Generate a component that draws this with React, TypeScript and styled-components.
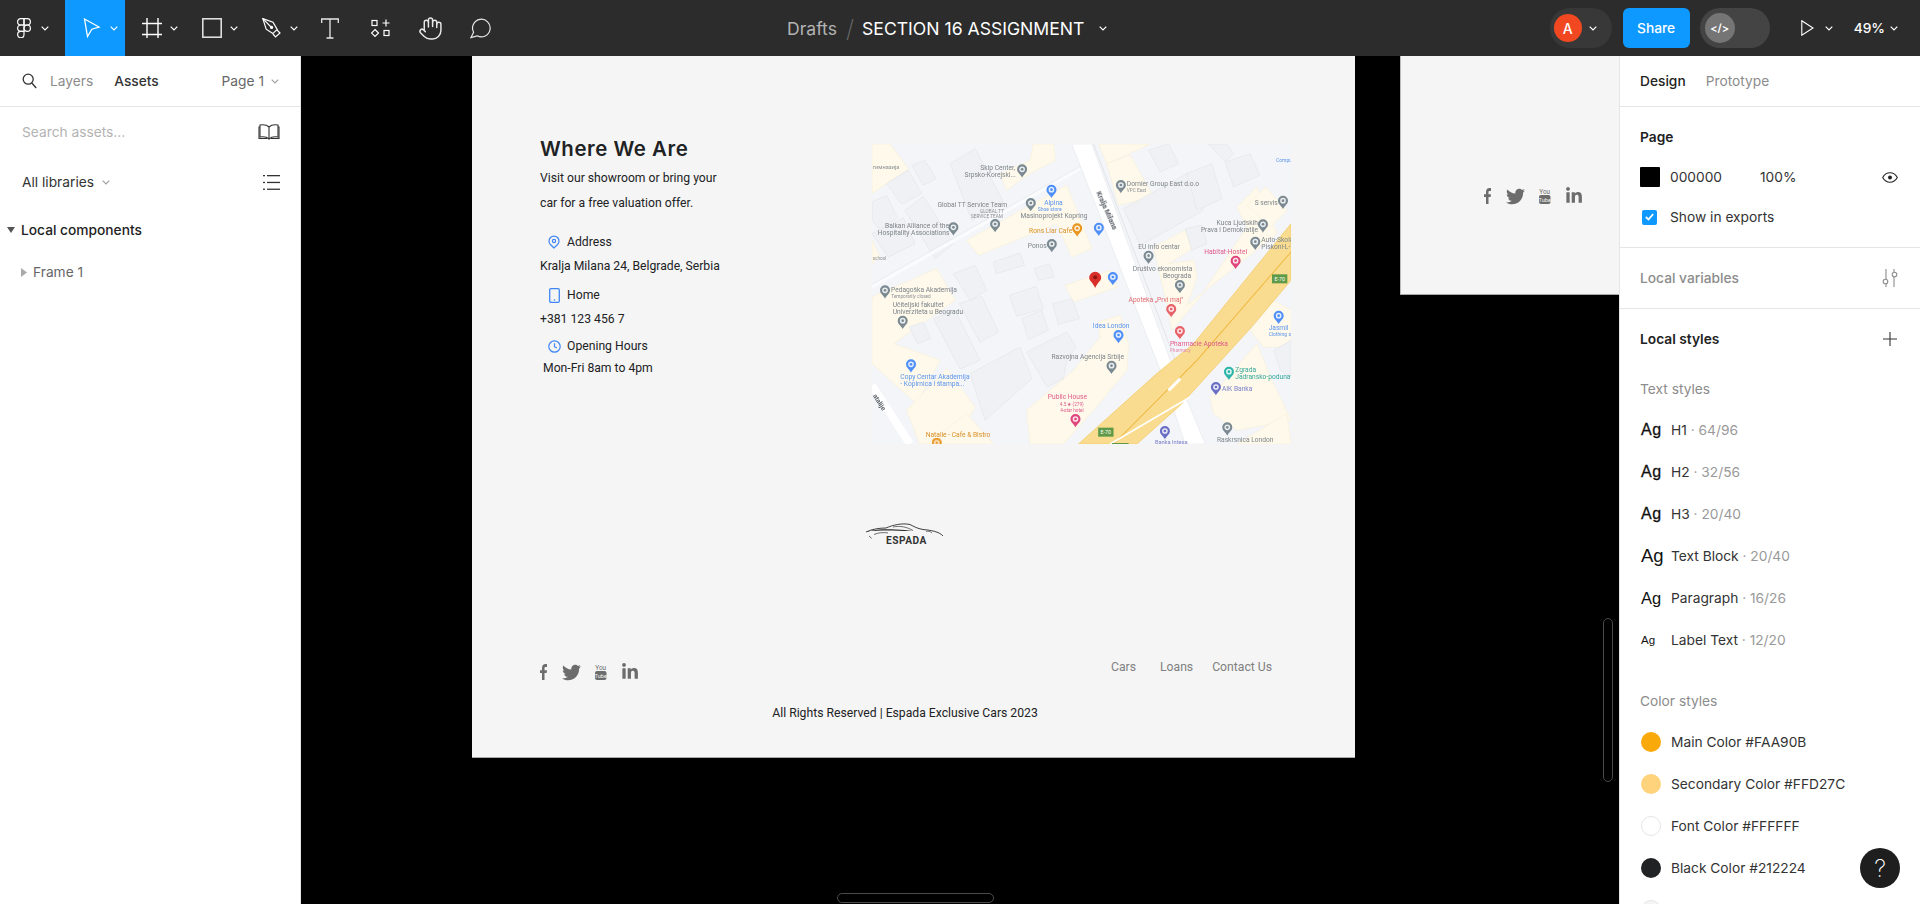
import React from "react";
import styled, { createGlobalStyle } from "styled-components";
import { FaTwitter, FaLinkedinIn } from "react-icons/fa";
import { Hand } from "lucide-react";

const Global = createGlobalStyle`
  html, body { margin: 0; padding: 0; height: 100%; overflow: hidden; background: #000; }
  body { font-family: Inter, "Liberation Sans", sans-serif; font-size: 13.75px; color: #333; }
  * { box-sizing: border-box; }
`;

const Shell = styled.div`
  width: 1920px; height: 904px; display: flex; flex-direction: column; overflow: hidden;
`;
const Toolbar = styled.header`
  height: 56px; flex: none; background: #2c2c2c; display: flex; align-items: center; position: relative; color: #fff;
`;
const Tools = styled.div`display: flex; height: 100%; width: 760px; flex: none;`;
const Tool = styled.div<{ $w: number; $active?: boolean; $pad?: number }>`
  width: ${(p) => p.$w}px; height: 100%; display: flex; align-items: center; flex: none;
  padding-left: ${(p) => p.$pad ?? 17}px; gap: 8px;
  background: ${(p) => (p.$active ? "#0d99ff" : "transparent")};
`;
const CenterTool = styled(Tool)`justify-content: center; padding-left: 0;`;
const Crumbs = styled.div`
  width: 350px; flex: none; margin-left: 27px; display: flex; align-items: center; font-size: 17.6px; white-space: nowrap;
`;
const Drafts = styled.span`color: #b3b3b3;`;
const Slash = styled.span`color: #6f6f6f; margin: 0 8px 0 9px; font-size: 24px; font-weight: 200;`;
const FileName = styled.span`color: #fff; font-weight: 400; margin-right: 15px;`;
const RightTools = styled.div`
  margin-left: auto; display: flex; align-items: center; height: 100%;
`;
const AvatarPill = styled.div`
  width: 62px; height: 40px; border-radius: 20px; background: #383838; display: flex; align-items: center; padding-left: 4px; gap: 7px;
`;
const Avatar = styled.div`
  width: 28px; height: 28px; border-radius: 50%; background: #f24822; color: #fff; display: flex; align-items: center; justify-content: center; font-size: 14px; font-weight: 500;
`;
const ShareButton = styled.div`
  width: 67px; height: 40px; margin-left: 11px; border-radius: 6px; background: #0d99ff; color: #fff; font-weight: 500; font-size: 13.75px; display: flex; align-items: center; justify-content: center;
`;
const DevPill = styled.div`
  width: 70px; height: 40px; margin-left: 10px; border-radius: 20px; background: #444; display: flex; align-items: center; padding-left: 5px;
`;
const DevKnob = styled.div`
  width: 30px; height: 30px; border-radius: 50%; background: #757575; display: flex; align-items: center; justify-content: center; font-size: 11px; font-weight: 600; color: #fff;
`;
const PlayWrap = styled.div`display: flex; align-items: center; gap: 11px; margin-left: 31px;`;
const ZoomWrap = styled.div`display: flex; align-items: center; gap: 5px; margin-left: 21px; margin-right: 22px; font-size: 13.75px; font-weight: 500; color: #fff;`;

const Body = styled.div`flex: 1; display: flex; min-height: 0;`;
const LeftPanel = styled.aside`
  width: 301px; flex: none; background: #fff; border-right: 1px solid #e5e5e5; display: flex; flex-direction: column;
`;
const LeftTabs = styled.div`
  height: 51px; border-bottom: 1px solid #e5e5e5; display: flex; align-items: center; padding-left: 22px; flex: none;
`;
const LeftTab = styled.span<{ $on?: boolean }>`
  color: ${(p) => (p.$on ? "#333" : "#8c8c8c")}; font-weight: ${(p) => (p.$on ? 500 : 400)}; margin-left: ${(p) => (p.$on ? 21 : 13)}px;
`;
const PageSel = styled.div`margin-left: auto; margin-right: 21px; display: flex; align-items: center; gap: 7px; color: #666;`;
const LeftRow = styled.div<{ $h: number; $pl?: number }>`
  height: ${(p) => p.$h}px; flex: none; display: flex; align-items: center; padding: 0 20px 0 ${(p) => p.$pl ?? 22}px;
`;
const Placeholder = styled.span`color: #b3b3b3;`;
const RowEnd = styled.div`margin-left: auto; display: flex;`;
const Libs = styled.span`color: #333; margin-right: 8px;`;
const GroupTitle = styled.span`font-weight: 500; color: #222; margin-left: 6px;`;
const FrameName = styled.span`color: #666; margin-left: 6px;`;

const Canvas = styled.main`flex: 1; position: relative; background: #000; overflow: hidden;`;
const DesignFrame = styled.section`
  position: absolute; left: 171px; top: 0; width: 883px; height: 702px; background: #f5f5f5; border-bottom: 1px solid #a8a8a8;
  font-family: Roboto, "Liberation Sans", sans-serif; font-size: 12.2px; color: #212224; display: flex; flex-direction: column;
`;
const SideFrame = styled.section`
  position: absolute; left: 1099px; top: 0; width: 219px; height: 239px; background: #f5f5f5; border-bottom: 1px solid #a8a8a8; border-left: 1px solid #bbb;
  padding: 132px 0 0 83px;
`;
const TopRow = styled.div`display: flex; padding: 79px 0 0 68px; flex: none;`;
const Info = styled.div`width: 332px; flex: none;`;
const Heading = styled.h2`
  margin: 0 0 2.5px; font: 600 20.4px/28px Inter, "Liberation Sans", sans-serif; letter-spacing: .55px; color: #212224; white-space: nowrap;
`;
const Para = styled.p`margin: 0 0 16.5px; line-height: 25px; white-space: nowrap;`;
const ContactHead = styled.div<{ $mt?: number }>`
  height: 20px; display: flex; align-items: center; margin-top: ${(p) => p.$mt ?? 0}px; line-height: 20px;
`;
const ContactIcon = styled.span`width: 27px; display: flex; justify-content: center; flex: none; padding-left: 1px;`;
const ContactLine = styled.div<{ $mt: number; $pl?: number }>`
  line-height: 20px; margin-top: ${(p) => p.$mt}px; padding-left: ${(p) => p.$pl ?? 0}px; white-space: nowrap;
`;
const MapBox = styled.div`width: 419px; height: 300px; margin-top: 9px; flex: none; overflow: hidden; background: #f4f5f8;`;
const MapSvg = styled.svg`width: 419px; height: 300px; display: block; filter: blur(.5px);`;
const LogoWrap = styled.div`padding-left: 394px; margin-top: 79px; height: 23px; flex: none; position: relative;`;
const LogoName = styled.div`
  width: 78px; text-align: center; padding-left: 3px; margin-top: -4px; font-size: 10.2px; line-height: 10px; font-weight: 700; color: #333; letter-spacing: .5px;
`;
const FooterRow = styled.div`display: flex; justify-content: space-between; padding: 0 83px 0 68px; margin-top: 111px; flex: none; height: 23px;`;
const Socials = styled.div<{ $mt?: number }>`
  display: flex; gap: 14.5px; align-items: center; color: #6c6c6c; height: 16px; margin-top: ${(p) => p.$mt ?? 0}px;
`;
const FooterLinks = styled.nav`display: flex; line-height: 20px; color: #808080;`;
const FooterLink = styled.span<{ $ml: number }>`margin-left: ${(p) => p.$ml}px;`;
const Copyright = styled.div`margin-top: 23px; text-align: center; padding-right: 17px; line-height: 20px; flex: none;`;
const ScrollV = styled.div`position: absolute; left: 1302px; top: 562px; width: 10px; height: 164px; border: 1.5px solid #4a4a4a; border-radius: 5px;`;
const ScrollH = styled.div`position: absolute; left: 536px; top: 837px; width: 157px; height: 10px; border: 1.5px solid #4a4a4a; border-radius: 5px;`;

const RightPanel = styled.aside`
  width: 301px; flex: none; background: #fff; border-left: 1px solid #e5e5e5; display: flex; flex-direction: column; overflow: hidden; position: relative;
`;
const RightTabs = styled.div`height: 51px; flex: none; border-bottom: 1px solid #e5e5e5; display: flex; align-items: center; padding-left: 20px; gap: 20px;`;
const RightTab = styled.span<{ $on?: boolean }>`color: ${(p) => (p.$on ? "#222" : "#8c8c8c")}; font-weight: ${(p) => (p.$on ? 500 : 400)};`;
const Section = styled.div`padding: 20px 22px 20px 20px; border-bottom: 1px solid #e5e5e5; flex: none;`;
const VarSection = styled.div`height: 61px; padding: 0 22px 0 20px; border-bottom: 1px solid #e5e5e5; display: flex; align-items: center; justify-content: space-between; color: #8c8c8c; font-weight: 500; flex: none;`;
const TitleRow = styled.div`height: 20px; display: flex; align-items: center; justify-content: space-between; color: #222; font-weight: 600;`;
const PageRow = styled.div`height: 20px; margin-top: 20px; display: flex; align-items: center;`;
const BlackSwatch = styled.div`width: 20px; height: 20px; background: #000; border-radius: 1px;`;
const HexValue = styled.span`margin-left: 10px; width: 90px;`;
const Checkbox = styled.div`width: 15px; height: 15px; border-radius: 2px; background: #0d99ff; margin-left: 2px; margin-right: 13px; display: flex; align-items: center; justify-content: center;`;
const EyeSlot = styled.span`margin-left: auto; display: flex;`;
const StyleSection = styled.div`padding: 20px 23px 0 20px; flex: none;`;
const SubHead = styled.div`height: 20px; margin-top: 30px; margin-bottom: 10px; line-height: 20px; color: #8c8c8c; font-weight: 400;`;
const StyleRow = styled.div`height: 42px; display: flex; align-items: center; white-space: nowrap;`;
const AgCell = styled.span<{ $s: number; $heavy?: boolean }>`
  width: 31px; flex: none; padding-left: 1px; font-family: "Liberation Sans", sans-serif; font-size: ${(p) => p.$s}px; color: #111;
  letter-spacing: ${(p) => (p.$heavy ? "0.5px" : "0")};
  -webkit-text-stroke: ${(p) => (p.$heavy ? "0.3px #111" : "0")};
`;
const Meta = styled.span`color: #999;`;
const ColorDot = styled.span<{ $c: string; $ring?: boolean }>`
  width: 20px; height: 20px; border-radius: 50%; flex: none; margin: 0 10px 0 1px; background: ${(p) => p.$c}; border: ${(p) => (p.$ring ? "1px solid #e5e5e5" : "none")};
`;
const HelpBtn = styled.div`
  position: absolute; right: 20px; top: 792px; width: 40px; height: 40px; border-radius: 50%; background: #1e1e1e; color: #fff; display: flex; align-items: center; justify-content: center; font-size: 24px; font-weight: 200;
`;

const Chevron = ({ c = "#fff", w = 8 }: { c?: string; w?: number }) => (
  <svg width={w} height={5} viewBox="0 0 8 5" fill="none"><path d="M.7.7 4 4l3.3-3.3" stroke={c} strokeWidth="1.2" /></svg>
);
const FigmaIcon = () => (
  <svg width="16" height="20" viewBox="0 0 16 20" fill="none" stroke="#fff" strokeWidth="1.2">
    <path d="M7 .6H3.8a3.2 3.2 0 0 0 0 6.4H7Z" /><path d="M7 .6h3.2a3.2 3.2 0 0 1 0 6.4H7Z" />
    <path d="M7 7H3.8a3.2 3.2 0 0 0 0 6.4H7Z" /><circle cx="10.2" cy="10.2" r="3.2" />
    <path d="M3.8 13.4H7v3.2a3.2 3.2 0 1 1-3.2-3.2Z" />
  </svg>
);
const CursorIcon = () => (
  <svg width="20" height="20" viewBox="0 0 20 20" fill="none" stroke="#fff" strokeWidth="1.3"><path d="M2.5 1 17 9l-7.2 2.2L5.5 18.5Z" /></svg>
);
const FrameIcon = () => (
  <svg width="20" height="20" viewBox="0 0 20 20" fill="none" stroke="#fff" strokeWidth="1.4"><path d="M5 0v20M16 0v20M0 5.5h20M0 16.5h20" /></svg>
);
const RectIcon = () => (
  <svg width="20" height="20" viewBox="0 0 20 20" fill="none" stroke="#ddd" strokeWidth="1.6"><rect x=".8" y=".8" width="18.4" height="18.4" /></svg>
);
const PenIcon = () => (
  <svg width="20" height="20" viewBox="0 0 20 20" fill="none" stroke="#fff" strokeWidth="1.2">
    <path d="M.8.6 11 4.2l4.2 7.2-4.4 4.2-6.6-4.4Z" /><path d="M.8.6 9 9" /><circle cx="9.6" cy="9.4" r="1" fill="#fff" />
    <path d="m11 16 2.5 3 4.5-4-3-3" />
  </svg>
);
const TextIcon = () => (
  <svg width="18" height="21" viewBox="0 0 18 21" fill="none" stroke="#e8e8e8" strokeWidth="1.3"><path d="M.7 5V1h16.6v4M9 1v19M5.5 20h7" /></svg>
);
const ComponentsIcon = () => (
  <svg width="19" height="19" viewBox="0 0 19 19" fill="none" stroke="#fff" strokeWidth="1.2">
    <rect x="1" y="1.5" width="5" height="5" /><path d="M15 .5v7M11.5 4h7" /><path d="M4 10.5 7.5 14 4 17.5.5 14Z" /><rect x="13" y="11.5" width="5" height="5" />
  </svg>
);
const CommentIcon = () => (
  <svg width="21" height="21" viewBox="0 0 21 21" fill="none" stroke="#e8e8e8" strokeWidth="1.2"><path d="M1 19.5 3.6 14.2a8.8 8.8 0 1 1 3.6 3.6Z" /></svg>
);
const PlayIcon = () => (
  <svg width="13" height="16" viewBox="0 0 13 16" fill="none" stroke="#fff" strokeWidth="1.1"><path d="M.8.8 12 8 .8 15.2Z" /></svg>
);
const SearchIcon = () => (
  <svg width="15" height="16" viewBox="0 0 15 16" fill="none" stroke="#333" strokeWidth="1.3"><circle cx="6.2" cy="6.2" r="5" /><path d="m9.8 10 4.4 5" /></svg>
);
const BookIcon = () => (
  <svg width="22" height="16" viewBox="0 0 22 16" fill="none" stroke="#333" strokeWidth="1.1">
    <path d="M11 3C9 1 5 .5 2 1v12c3-.5 7 0 9 2 2-2 6-2.500 9-2V1c-3-.5-7 0-9 2Zm0 0v12" /><path d="M2 3H1v11.500h8M20 3h1v11.500h-8" />
  </svg>
);
const ListIcon = () => (
  <svg width="17" height="15" viewBox="0 0 17 15" fill="#333"><rect y="0" width="2" height="1.3" /><rect x="4" y="0" width="13" height="1.3" /><rect y="6.800" width="2" height="1.3" /><rect x="4" y="6.800" width="13" height="1.3" /><rect y="13.600" width="2" height="1.3" /><rect x="4" y="13.600" width="13" height="1.3" /></svg>
);
const Tri = ({ c, right }: { c: string; right?: boolean }) =>
  right ? (
    <svg width="6" height="9" viewBox="0 0 6 9"><path d="M0 0l6 4.500L0 9Z" fill={c} /></svg>
  ) : (
    <svg width="8" height="6" viewBox="0 0 8 6"><path d="M0 0h8L4 6Z" fill={c} /></svg>
  );
const PinIcon = () => (
  <svg width="12" height="14" viewBox="0 0 12 14" fill="none" stroke="#3f86f5" strokeWidth="1.2"><path d="M6 13 2.400 9.500a5 5 0 1 1 7.200 0Z" /><circle cx="6" cy="6" r="1.600" /></svg>
);
const PhoneIcon = () => (
  <svg width="11" height="15" viewBox="0 0 11 15" fill="none" stroke="#3f86f5" strokeWidth="1.3"><rect x=".7" y=".7" width="9.600" height="13.600" rx="1.200" /><path d="M4.800 12h1.400" /></svg>
);
const ClockIcon = () => (
  <svg width="13" height="13" viewBox="0 0 13 13" fill="none" stroke="#3f86f5" strokeWidth="1.2"><circle cx="6.500" cy="6.500" r="5.700" /><path d="M6.500 3.200v3.500l2.400 1.300" /></svg>
);
const EyeIcon = () => (
  <svg width="16" height="11" viewBox="0 0 16 11" fill="none" stroke="#222" strokeWidth="1.1"><path d="M.7 5.500C2.500 2.300 5 .8 8 .8s5.500 1.500 7.300 4.700C13.500 8.700 11 10.200 8 10.200S2.500 8.700.7 5.500Z" /><circle cx="8" cy="5.500" r="2" fill="#222" stroke="none" /></svg>
);
const SlidersIcon = () => (
  <svg width="16" height="18" viewBox="0 0 16 18" fill="none" stroke="#8c8c8c" strokeWidth="1.100"><path d="M4 0v10M4 15v3M12 0v3M12 8v10" /><circle cx="3.500" cy="12.500" r="2.300" /><circle cx="12.500" cy="5.500" r="2.300" /></svg>
);
const PlusIcon = () => (
  <svg width="14" height="14" viewBox="0 0 14 14" stroke="#333" strokeWidth="1.100"><path d="M7 0v14M0 7h14" /></svg>
);
const CheckMark = () => (
  <svg width="9" height="8" viewBox="0 0 9 8" fill="none" stroke="#fff" strokeWidth="1.800"><path d="m.8 4 2.700 2.500L8.200 1" /></svg>
);
const FbIcon = () => (
  <svg width="7" height="16" viewBox="0 0 7 16" fill="currentColor"><path d="M2 16V9H0V6.200h2V4C2 1.500 3.400 0 5.500 0H7v2.900H5.800c-1 0-1.300.5-1.300 1.200v2.100H7L6.600 9H4.500v7Z" /></svg>
);
const YtIcon = () => (
  <svg width="11.500" height="16" viewBox="0 0 11.500 16">
    <text x="5.750" y="5.500" textAnchor="middle" fontSize="6.400" fontFamily="Roboto, sans-serif" fill="currentColor">You</text>
    <rect x="0" y="7" width="11.500" height="9" rx="2" fill="currentColor" />
    <text x="5.750" y="13.700" textAnchor="middle" fontSize="5.600" fontFamily="Roboto, sans-serif" fill="#f5f5f5">Tube</text>
  </svg>
);
const SocialIcons = ({ mt }: { mt?: number }) => (
  <Socials $mt={mt}>
    <FbIcon />
    <FaTwitter size={19} />
    <YtIcon />
    <FaLinkedinIn size={18} />
  </Socials>
);

const CarLogo = () => (
  <svg width="78" height="17" viewBox="0 0 78 17" fill="none" style={{ display: "block" }}>
    <path d="M0 9C6 6 14 5 20 5 27 2 36-.2 44 1.500c4 2 7 4 13 5 8 .8 16 2 20 6.500" stroke="#2b2b2b" strokeWidth=".9" />
    <path d="M2 8.500C10 6 20 6 30 6.500c6 .2 11 .8 17 1.500-8 .3-18-.6-26-.6-7 0-13 .4-19 .6Z" fill="#2b2b2b" />
    <path d="M8 11.500c4-1.800 9-2.300 14-1.600M27 4c7-1.500 14 0 20 3.500M3 13c1 .6 2 1.500 2.500 2.500" stroke="#333" strokeWidth=".7" />
    <path d="M60 8.500c2-.6 5 0 6 1.500" stroke="#444" strokeWidth=".7" />
  </svg>
);

const blocks = [
  "36,41 90,41 145,115 36,190",
  "520,41 580,41 585,90 500,135 440,180 420,130 510,90",
  "715,41 870,41 740,100",
  "740,100 810,75 880,200 775,225",
  "320,330 620,165 695,355 635,380 590,280 355,375",
  "615,465 750,420 770,470 640,515",
  "880,350 975,300 995,355 925,400 1000,390 1010,440 980,525 1250,310 1190,170 1130,230 1160,290 1020,500 935,600 915,500",
  "36,500 230,415 285,510 100,640 240,690 170,820 36,700",
  "36,330 60,380 36,400",
  "140,840 260,715 345,830 280,941 180,941",
  "500,840 640,720 720,620 715,575 780,555 805,640 800,720 700,840 610,941 510,941",
  "1050,800 1190,640 1230,740 1292,870 1130,900 1060,850",
  "1130,941 1280,850 1292,941",
  "1170,600 1240,510 1292,540 1292,650 1210,650",
  "1160,225 1215,170 1280,240 1230,290",
  "200,941 320,850 400,941",
];
const buildings = [
  "270,100 345,55 430,215 335,270",
  "155,105 195,90 228,145 190,165",
  "80,160 145,120 185,190 125,222",
  "36,215 80,195 112,262 60,300 36,270",
  "135,240 190,198 280,340 225,385",
  "36,310 130,262 165,340 85,380",
  "400,395 480,368 493,405 408,430",
  "523,415 568,400 582,440 535,450",
  "280,430 345,405 380,480 330,510",
  "448,495 528,468 550,535 470,558",
  "485,565 545,540 565,600 505,628",
  "578,520 635,505 658,565 595,582",
  "298,520 365,498 415,605 360,636",
  "220,565 285,540 360,690 300,716",
  "148,590 190,575 212,625 172,640",
  "330,730 480,650 515,745 375,870",
  "500,665 620,605 648,650 620,690 610,745 560,770",
  "865,60 925,40 955,100 900,125",
  "790,235 980,130 1030,240 840,345",
  "980,130 1055,100 1085,205 1010,240",
  "975,295 1025,285 1040,340 995,360",
  "1095,95 1170,70 1198,135 1120,170",
  "1045,41 1100,41 1120,70 1095,95",
  "1240,660 1292,630 1292,740 1260,720",
];
const labels: [string, number, number, string, "start" | "end" | "middle"?, number?][] = [
  ["гимназија", 38, 117, "#8a8f94", "start", 17],
  ["Skip Center,", 465, 119, "#7d858b", "end"],
  ["Srpsko-Korejski...", 467, 140, "#7d858b", "end"],
  ["Alpina", 552, 224, "#5b94ee", "start"],
  ["Shoe store", 533, 241, "#5b94ee", "start", 15],
  ["Global TT Service Team", 232, 230, "#7d858b", "start"],
  ["GLOBAL TT", 360, 247, "#8a8f94", "start", 14],
  ["SERVICE TEAM", 333, 262, "#8a8f94", "start", 14],
  ["Masinoprojekt Kopring", 481, 263, "#7d858b", "start"],
  ["Balkan Alliance of the", 75, 293, "#7d858b", "start"],
  ["Hospitality Associations", 53, 315, "#7d858b", "start"],
  ["Rons Liar Cafe", 507, 308, "#d8902a", "start"],
  ["Ponos", 503, 353, "#7d858b", "start"],
  ["school", 38, 388, "#8a8f94", "start", 14],
  ["Dornier Group East d.o.o", 800, 167, "#7d858b", "start"],
  ["VPC East", 800, 184, "#8a8f94", "start", 14],
  ["S servis", 1183, 224, "#7d858b", "start"],
  ["Kuca Ljudskih", 1069, 284, "#7d858b", "start"],
  ["Prava i Demokratije", 1022, 304, "#7d858b", "start"],
  ["Auto-Skola", 1203, 335, "#7d858b", "start"],
  ["Piskoni-L-1", 1203, 356, "#7d858b", "start"],
  ["Compu", 1247, 94, "#5b94ee", "start", 15],
  ["EU info centar", 834, 356, "#7d858b", "start"],
  ["Habitat-Hostel", 1032, 372, "#df5a8a", "start"],
  ["Društvo ekonomista", 818, 423, "#7d858b", "start"],
  ["Beograda", 908, 444, "#7d858b", "start"],
  ["Pedagoška Akademija", 93, 485, "#7d858b", "start"],
  ["Temporarily closed", 94, 502, "#8a8f94", "start", 14],
  ["Učiteljski fakultet", 98, 530, "#7d858b", "start"],
  ["Univerziteta u Beogradu", 98, 551, "#7d858b", "start"],
  ["Apoteka „Prvi maj\"", 805, 515, "#e0686e", "start"],
  ["Idea London", 698, 593, "#5b94ee", "start"],
  ["Jasmil", 1225, 600, "#5b94ee", "start"],
  ["Clothing s", 1225, 618, "#5b94ee", "start", 15],
  ["Pharmacie Apoteka", 929, 647, "#df5a8a", "start"],
  ["Pharmacy", 929, 664, "#e58aa8", "start", 14],
  ["Razvojna Agencija Srbije", 574, 685, "#7d858b", "start"],
  ["Zgrada", 1125, 726, "#35a79c", "start"],
  ["Jadransko-podunav", 1125, 747, "#35a79c", "start"],
  ["Copy Centar Akademija", 121, 747, "#5b94ee", "start"],
  ["- Kopirnica i štampa...", 121, 768, "#5b94ee", "start"],
  ["AIK Banka", 1085, 782, "#7a7fc9", "start"],
  ["Public House", 563, 806, "#df5a8a", "start"],
  ["4.5 ★ (279)", 599, 827, "#df5a8a", "start", 14],
  ["4-star hotel", 600, 845, "#df5a8a", "start", 14],
  ["Natalie - Cafe & Bistro", 197, 919, "#d8902a", "start"],
  ["Banka Intesa", 884, 941, "#7a7fc9", "start", 17],
  ["Raskrsnica London", 1070, 935, "#7d858b", "start"],
];
const pins: [number, number, string][] = [
  [486, 121, "#7b8a92"], [574, 182, "#4f8ff7"], [512, 222, "#7b8a92"], [405, 285, "#7b8a92"], [280, 295, "#7b8a92"],
  [651, 298, "#e8951f"], [716, 296, "#4f8ff7"], [575, 345, "#7b8a92"], [782, 168, "#7b8a92"], [1268, 215, "#7b8a92"],
  [1208, 286, "#7b8a92"], [1185, 338, "#7b8a92"], [1126, 395, "#e0467c"], [865, 380, "#7b8a92"], [758, 444, "#4f8ff7"],
  [959, 468, "#7b8a92"], [75, 484, "#7b8a92"], [128, 575, "#7b8a92"], [933, 540, "#e8626a"], [959, 606, "#e8626a"],
  [775, 618, "#4f8ff7"], [1255, 560, "#4f8ff7"], [754, 710, "#7b8a92"], [1106, 728, "#2bb5a8"], [1067, 774, "#6a6fc4"],
  [153, 706, "#4f8ff7"], [646, 870, "#e0467c"], [914, 906, "#6a6fc4"], [1101, 895, "#7b8a92"], [230, 941, "#e8951f"],
];
const Pin = ({ x, y, c }: { x: number; y: number; c: string }) => (
  <g transform={`translate(${x} ${y})`}>
    <path d="M0 21C-4 11-15 7-15-4A15 15 0 1 1 15-4C15 7 4 11 0 21Z" fill={c} />
    <circle r="8.500" cy="-4" fill="#fff" opacity=".85" />
    <circle r="4" cy="-4" fill={c} />
  </g>
);

const MapArt = () => (
  <MapSvg viewBox="36 41 1256 900" preserveAspectRatio="none">
    <rect x="36" y="41" width="1256" height="900" fill="#f4f5f8" />
    {blocks.map((p) => <polygon key={p} points={p} fill="#fef9ea" stroke="#f8f0da" strokeWidth="2" />)}
    {buildings.map((p) => <polygon key={p} points={p} fill="#f0f1f4" stroke="#e4e6ea" strokeWidth="2" />)}
    <path d="M36 470 660 115" stroke="#fafbfc" strokeWidth="10" fill="none" />
    <path d="M36 462 660 108" stroke="#dfe2e7" strokeWidth="1.500" fill="none" />
    <polygon points="635,41 695,41 930,690 1035,941 975,941 900,720" fill="#fff" stroke="#dfe2e7" strokeWidth="1.500" />
    <path d="M700 41 945 690" stroke="#d8dbe1" strokeWidth="2" fill="none" />
    <path d="M36 765 150 941" stroke="#fff" strokeWidth="24" fill="none" />
    <polygon points="655,941 895,725 1000,640 1292,280 1292,450 1165,600 960,825 830,941" fill="#f9dc8f" stroke="#f3c75a" strokeWidth="2" />
    <path d="M760 941 1010 690 1292 365" stroke="#f0b840" strokeWidth="3" fill="none" />
    <path d="M925 780 960 745" stroke="#fff" strokeWidth="9" fill="none" />
    <path d="M750 941 990 800" stroke="#fff" strokeWidth="5" fill="none" />
    <rect x="1235" y="432" width="46" height="27" fill="#5e9a47" />
    <text x="1258" y="451" textAnchor="middle" fontSize="16" fontFamily="Roboto, sans-serif" fill="#fff">E-70</text>
    <rect x="714" y="892" width="46" height="27" fill="#5e9a47" />
    <text x="737" y="911" textAnchor="middle" fontSize="16" fontFamily="Roboto, sans-serif" fill="#fff">E-70</text>
    <rect x="755" y="938" width="50" height="6" fill="#5e9a47" />
    <text transform="translate(708 187) rotate(66)" fontSize="21" fontWeight="700" fontFamily="Roboto, sans-serif" fill="#5a6068">Kralja Milana</text>
    <text transform="translate(38 796) rotate(58)" fontSize="20" fontWeight="700" fontFamily="Roboto, sans-serif" fill="#5a6068">atalije</text>
    {labels.map(([t, x, y, c, a, s]) => (
      <text key={t + x} x={x} y={y} fill={c} fontSize={s ?? 20} textAnchor={a ?? "start"} fontFamily="Roboto, sans-serif">{t}</text>
    ))}
    {pins.map(([x, y, c]) => <Pin key={`${x}-${y}`} x={x} y={y} c={c} />)}
    <g transform="translate(705 445)">
      <path d="M0 28C-6 12-18 6-18-3A18 18 0 0 1 18-3C18 6 6 12 0 28Z" fill="#d92f2b" />
      <circle cy="-4" r="6" fill="#8f1512" />
    </g>
  </MapSvg>
);

const textStyles: [string, string, number, boolean?][] = [
  ["H1", "64/96", 16, true],
  ["H2", "32/56", 16, true],
  ["H3", "20/40", 16, true],
  ["Text Block", "20/40", 18.5],
  ["Paragraph", "16/26", 16.5],
  ["Label Text", "12/20", 11.5],
];
const colorStyles: [string, string, boolean?][] = [
  ["Main Color #FAA90B", "#faa90b"],
  ["Secondary Color #FFD27C", "#ffd27c"],
  ["Font Color #FFFFFF", "#ffffff", true],
  ["Black Color #212224", "#212224"],
  ["", "#f5f5f5", true],
];

export default function App() {
  return (
    <Shell>
      <Global />
      <Toolbar>
        <Tools>
          <Tool $w={65}><FigmaIcon /><Chevron /></Tool>
          <Tool $w={60} $active><CursorIcon /><Chevron /></Tool>
          <Tool $w={60}><FrameIcon /><Chevron /></Tool>
          <Tool $w={60}><RectIcon /><Chevron /></Tool>
          <Tool $w={60}><PenIcon /><Chevron /></Tool>
          <CenterTool $w={50}><TextIcon /></CenterTool>
          <CenterTool $w={50}><ComponentsIcon /></CenterTool>
          <CenterTool $w={50}><Hand size={25} strokeWidth={1.4} color="#e8e8e8" /></CenterTool>
          <CenterTool $w={50}><CommentIcon /></CenterTool>
        </Tools>
        <Crumbs>
          <Drafts>Drafts</Drafts>
          <Slash>/</Slash>
          <FileName>SECTION 16 ASSIGNMENT</FileName>
          <Chevron />
        </Crumbs>
        <RightTools>
          <AvatarPill><Avatar>A</Avatar><Chevron /></AvatarPill>
          <ShareButton>Share</ShareButton>
          <DevPill><DevKnob>&lt;/&gt;</DevKnob></DevPill>
          <PlayWrap><PlayIcon /><Chevron /></PlayWrap>
          <ZoomWrap>49%<Chevron /></ZoomWrap>
        </RightTools>
      </Toolbar>
      <Body>
        <LeftPanel>
          <LeftTabs>
            <SearchIcon />
            <LeftTab>Layers</LeftTab>
            <LeftTab $on>Assets</LeftTab>
            <PageSel>Page 1<Chevron c="#a0a0a0" /></PageSel>
          </LeftTabs>
          <LeftRow $h={50}><Placeholder>Search assets...</Placeholder><RowEnd><BookIcon /></RowEnd></LeftRow>
          <LeftRow $h={50}><Libs>All libraries</Libs><Chevron c="#a0a0a0" /><RowEnd><ListIcon /></RowEnd></LeftRow>
          <LeftRow $h={46} $pl={7}><Tri c="#555" /><GroupTitle>Local components</GroupTitle></LeftRow>
          <LeftRow $h={38} $pl={21}><Tri c="#aaa" right /><FrameName>Frame 1</FrameName></LeftRow>
        </LeftPanel>
        <Canvas>
          <DesignFrame>
            <TopRow>
              <Info>
                <Heading>Where We Are</Heading>
                <Para>Visit our showroom or bring your<br />car for a free valuation offer.</Para>
                <ContactHead><ContactIcon><PinIcon /></ContactIcon>Address</ContactHead>
                <ContactLine $mt={4}>Kralja Milana 24, Belgrade, Serbia</ContactLine>
                <ContactHead $mt={9}><ContactIcon><PhoneIcon /></ContactIcon>Home</ContactHead>
                <ContactLine $mt={4}>+381 123 456 7</ContactLine>
                <ContactHead $mt={7}><ContactIcon><ClockIcon /></ContactIcon>Opening Hours</ContactHead>
                <ContactLine $mt={2} $pl={3}>Mon-Fri 8am to 4pm</ContactLine>
              </Info>
              <MapBox><MapArt /></MapBox>
            </TopRow>
            <LogoWrap>
              <CarLogo />
              <LogoName>ESPADA</LogoName>
            </LogoWrap>
            <FooterRow>
              <SocialIcons mt={7} />
              <FooterLinks>
                <FooterLink $ml={0}>Cars</FooterLink>
                <FooterLink $ml={24}>Loans</FooterLink>
                <FooterLink $ml={19}>Contact Us</FooterLink>
              </FooterLinks>
            </FooterRow>
            <Copyright>All Rights Reserved | Espada Exclusive Cars 2023</Copyright>
          </DesignFrame>
          <SideFrame><SocialIcons /></SideFrame>
          <ScrollV />
          <ScrollH />
        </Canvas>
        <RightPanel>
          <RightTabs><RightTab $on>Design</RightTab><RightTab>Prototype</RightTab></RightTabs>
          <Section>
            <TitleRow>Page</TitleRow>
            <PageRow>
              <BlackSwatch />
              <HexValue>000000</HexValue>
              <span>100%</span>
              <EyeSlot><EyeIcon /></EyeSlot>
            </PageRow>
            <PageRow><Checkbox><CheckMark /></Checkbox>Show in exports</PageRow>
          </Section>
          <VarSection>Local variables<SlidersIcon /></VarSection>
          <StyleSection>
            <TitleRow>Local styles<PlusIcon /></TitleRow>
            <SubHead>Text styles</SubHead>
            {textStyles.map(([n, m, s, h]) => (
              <StyleRow key={n}><AgCell $s={s} $heavy={h}>Ag</AgCell>{n}&nbsp;<Meta>· {m}</Meta></StyleRow>
            ))}
            <SubHead>Color styles</SubHead>
            {colorStyles.map(([n, c, r]) => (
              <StyleRow key={c}><ColorDot $c={c} $ring={r} />{n}</StyleRow>
            ))}
          </StyleSection>
          <HelpBtn>?</HelpBtn>
        </RightPanel>
      </Body>
    </Shell>
  );
}
